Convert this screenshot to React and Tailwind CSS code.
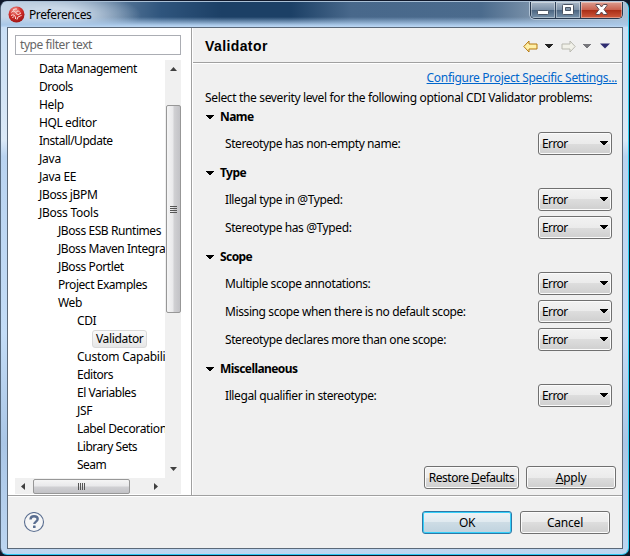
import React from 'react';

const tree = [
  ['Data Management', 'pl-6', 'tracking-[-0.5px]'],
  ['Drools', 'pl-6', 'tracking-[-0.5px]'],
  ['Help', 'pl-6', 'tracking-[-0.3px]'],
  ['HQL editor', 'pl-6', 'tracking-[-0.4px]'],
  ['Install/Update', 'pl-6', 'tracking-[-0.48px]'],
  ['Java', 'pl-6', 'tracking-[-0.2px]'],
  ['Java EE', 'pl-6', 'tracking-[-0.3px]'],
  ['JBoss jBPM', 'pl-6', 'tracking-[-0.35px]'],
  ['JBoss Tools', 'pl-6', 'tracking-[-0.25px]'],
  ['JBoss ESB Runtimes', 'pl-[43px]', 'tracking-[-0.42px]'],
  ['JBoss Maven Integration', 'pl-[43px]', 'tracking-[-0.42px]'],
  ['JBoss Portlet', 'pl-[43px]', 'tracking-[-0.4px]'],
  ['Project Examples', 'pl-[43px]', 'tracking-[-0.45px]'],
  ['Web', 'pl-[43px]', 'tracking-[-0.3px]'],
  ['CDI', 'pl-[62px]', 'tracking-[-0.4px]'],
  ['Validator', 'pl-[77px]', 'tracking-[-0.3px]'],
  ['Custom Capabilities', 'pl-[62px]', 'tracking-[-0.22px]'],
  ['Editors', 'pl-[62px]', 'tracking-[-0.5px]'],
  ['El Variables', 'pl-[62px]', 'tracking-[-0.45px]'],
  ['JSF', 'pl-[62px]', 'tracking-[-0.3px]'],
  ['Label Decorations', 'pl-[62px]', 'tracking-[-0.36px]'],
  ['Library Sets', 'pl-[62px]', 'tracking-[-0.48px]'],
  ['Seam', 'pl-[62px]', 'tracking-[-0.5px]'],
];

const sections = [
  { name: 'Name', rows: ['Stereotype has non-empty name:'] },
  { name: 'Type', rows: ['Illegal type in @Typed:', 'Stereotype has @Typed:'] },
  {
    name: 'Scope',
    rows: ['Multiple scope annotations:', 'Missing scope when there is no default scope:', 'Stereotype declares more than one scope:'],
  },
  { name: 'Miscellaneous', rows: ['Illegal qualifier in stereotype:'] },
];

function Down({ className }) {
  return (
    <svg className={className} width="9" height="5" viewBox="0 0 9 5" fill="currentColor" shapeRendering="crispEdges">
      <path d="M0 0h8v1H0zM1 1h6v1H1zM2 2h4v1H2zM3 3h2v1H3z" />
    </svg>
  );
}

const face = 'bg-[linear-gradient(#f2f2f2,#ebebeb_50%,#dddddd_50%,#cfcfcf)] border border-[#707070] rounded-[3px] shadow-[inset_0_0_0_1px_#fbfbfb]';

function Combo() {
  return (
    <div className={`flex h-[23px] w-[74px] items-center justify-between pl-[3px] pr-[2px] ${face}`}>
      <span className="tracking-[-0.6px]">Error</span>
      <Down />
    </div>
  );
}

function Button({ children, className }) {
  return <div className={`flex h-[23px] items-center justify-center ${className}`}>{children}</div>;
}

function Title() {
  return (
    <div className="flex h-[25px] shrink-0 items-start justify-between rounded-t-[6px] bg-[linear-gradient(to_bottom,transparent_60%,#a9c8e8_92%,#bdd7f3),radial-gradient(ellipse_90px_24px_at_50px_13px,#c9d8e8_30%,transparent),linear-gradient(90deg,#c3d5e8_0px,#8ba3bc_60px,#2f557d_160px,#1c4066_220px,#1c4066_290px,#48688b_350px,#4b6b8d_480px,#8197ae_540px,#a9bfd5_628px)] pl-[7px] pr-[5px]">
      <div className="flex h-[25px] items-center gap-1">
        <svg width="17" height="17" viewBox="0 0 17 17">
          <defs>
            <radialGradient id="ball" cx="40%" cy="25%" r="75%">
              <stop offset="0" stopColor="#ee9a94" />
              <stop offset=".5" stopColor="#d5332e" />
              <stop offset="1" stopColor="#a01515" />
            </radialGradient>
          </defs>
          <circle cx="8.5" cy="8.5" r="8" fill="url(#ball)" />
          <path d="M3.500 6.500q1.500-3 3-1t2.500 0 3 1M3 9.500q2-1.500 3.500 0t1 3.500M9 13.500q.500-3 2-3t2.500-1.500M8 7.500q2 2.500 5-.5M5 4q2-1.500 4-1M4.500 12l1-1.500" fill="none" stroke="#fbe0dd" strokeWidth="1" />
        </svg>
        <span className="tracking-[-0.4px]">Preferences</span>
      </div>
      <div className="flex h-[17px] overflow-hidden rounded-b-[5px] border border-t-0 border-[#26384f] shadow-[0_0_0_1px_#b4c6d8]">
        <div className="flex w-[25px] justify-center border-r border-[#31445b] bg-[linear-gradient(#a9b8c8,#7d91a8_48%,#4b6480_50%,#7893ac)] pt-[8px] shadow-[inset_0_0_0_1px_#ffffff60]">
          <svg width="12" height="5"><rect x=".5" y=".5" width="11" height="4" rx="1" fill="#fff" stroke="#4b5564" /></svg>
        </div>
        <div className="flex w-[25px] justify-center border-r border-[#31445b] bg-[linear-gradient(#a9b8c8,#7d91a8_48%,#4b6480_50%,#7893ac)] pt-[2px] shadow-[inset_0_0_0_1px_#ffffff60]">
          <svg width="12" height="11"><path d="M.5 1.500q0-1 1-1h9q1 0 1 1v8q0 1-1 1h-9q-1 0-1-1zM3.500 3.500v3h5v-3z" fillRule="evenodd" fill="#fff" stroke="#4b5564" /></svg>
        </div>
        <div className="flex w-[41px] justify-center bg-[linear-gradient(#dc9d90,#c9624f_48%,#a82c15_50%,#cf5a3c)] pt-[2px] shadow-[inset_0_0_0_1px_#ffffff60]">
          <svg width="13" height="11" viewBox="0 0 13 11"><path d="M1 .5h3.500l2 2.500 2-2.500H12v1L9 5.500l3 4v1H8.500l-2-2.500-2 2.500H1v-1l3-4-3-4z" fill="#fff" stroke="#5d4a50" /></svg>
        </div>
      </div>
    </div>
  );
}

function Sidebar() {
  return (
    <div className="flex w-[184px] shrink-0 flex-col border-r border-[#a0a0a0] bg-white pl-[7px] pt-[7px]">
      <div className="flex h-5 w-[166px] items-center border border-[#abadb3] pl-1 tracking-[-0.42px] text-[#666]">type filter text</div>
      <div className="mt-[5px] flex h-[418px]">
        <div className="w-[150px] overflow-hidden">
          {tree.map(([t, pad, track]) => (
            <div key={t} className={`flex h-[18px] items-center whitespace-nowrap ${pad}`}>
              {t === 'Validator' ? (
                <span className="flex h-[18px] w-[55px] items-center rounded-[3px] border border-[#d9d9d9] bg-[linear-gradient(#fafafa,#e6e6e6)] pl-[3px] tracking-[-0.35px]">{t}</span>
              ) : (
                <span className={track}>{t}</span>
              )}
            </div>
          ))}
        </div>
        <div className="flex w-4 flex-col items-center bg-[#f0f0f0]">
          <svg className="mt-[7px] shrink-0" width="7" height="4" fill="#404040"><path d="M3.500 0L7 4H0z" /></svg>
          <div className="mt-[34px] flex h-[208px] w-[15px] shrink-0 flex-col items-center justify-center gap-px rounded-[2px] border border-[#979797] bg-[linear-gradient(90deg,#f5f5f5,#e9e9eb_45%,#d0d0d3_55%,#c2c2c6)]">
            <div className="h-px w-[7px] bg-[#555]" />
            <div className="h-px w-[7px] bg-[#555]" />
            <div className="h-px w-[7px] bg-[#555]" />
            <div className="h-px w-[7px] bg-[#555]" />
          </div>
          <svg className="mt-[154px] shrink-0" width="7" height="4" fill="#404040"><path d="M3.500 4L7 0H0z" /></svg>
        </div>
      </div>
      <div className="flex h-4 w-[166px] items-center bg-[#f0f0f0] pl-[6px]">
        <svg width="4" height="7" fill="#404040"><path d="M0 3.500L4 0V7z" /></svg>
        <div className="ml-2 flex h-[15px] w-[97px] items-center justify-center gap-px rounded-[2px] border border-[#979797] bg-[linear-gradient(#f5f5f5,#e9e9eb_45%,#d0d0d3_55%,#c2c2c6)]">
          <div className="h-[7px] w-px bg-[#555]" />
          <div className="h-[7px] w-px bg-[#555]" />
          <div className="h-[7px] w-px bg-[#555]" />
          <div className="h-[7px] w-px bg-[#555]" />
        </div>
        <svg className="ml-[24px]" width="4" height="7" fill="#404040"><path d="M4 3.500L0 0V7z" /></svg>
      </div>
    </div>
  );
}

function Nav() {
  return (
    <div className="flex items-center">
      <svg width="15" height="13" viewBox="0 0 15 13">
        <path d="M.8 6.500L6 1v3h8v5H6v3z" fill="#fff0a8" stroke="#b5790f" strokeLinejoin="round" />
      </svg>
      <Down className="ml-[7px] text-[#222]" />
      <svg className="ml-[7px]" width="15" height="13" viewBox="0 0 15 13">
        <path d="M14.200 6.500L9 1v3H1v5h8v3z" fill="#f1f1e9" stroke="#b9b9b0" strokeLinejoin="round" />
      </svg>
      <Down className="ml-[7px] text-[#77777c]" />
      <svg className="ml-[8px]" width="10" height="6"><path d="M0 .5h10L5 5.500z" fill="#2e2c70" /></svg>
    </div>
  );
}

export default function App() {
  return (
    <div className="h-[556px] w-[630px] overflow-hidden bg-[#10182a] pt-px font-['Noto_Sans','Open_Sans',sans-serif] text-[12px] leading-4 text-black">
      <div className="flex h-[554px] w-[629px] flex-col rounded-[7px] border border-b-[#2cc6f2] border-l-[#56697e] border-r-[#2cd2f7] border-t-[#a9bfd5] bg-[linear-gradient(#c5dcf4,#dbe9f7_25%,#b9d3f0_28%,#c3dcf6_60%,#aac6e6_80%,#bdd6f1)]">
        <Title />
        <div className="ml-[6px] mr-[5px] flex h-[522px] flex-col border border-[#5b6979] bg-[#f0f0f0]">
          <div className="flex h-[468px] border-b border-[#a0a0a0]">
            <Sidebar />
            <div className="flex min-w-0 flex-1 flex-col border-l border-white">
              <div className="flex h-[35px] shrink-0 items-center justify-between border-b border-[#a0a0a0] pl-3 pr-[12px] pt-[2px]">
                <h1 className="font-['Liberation_Sans',Arial,sans-serif] text-[14px] font-bold tracking-[0.4px]">Validator</h1>
                <Nav />
              </div>
              <div className="flex h-[39px] shrink-0 flex-col border-t border-white">
                <div className="mt-[6px] flex justify-end pr-[5px]">
                  <span className="tracking-[-0.31px] text-[#0066cc] underline">Configure Project Specific Settings...</span>
                </div>
                <div className="mt-[4px] whitespace-nowrap pl-3 tracking-[-0.345px]">Select the severity level for the following optional CDI Validator problems:</div>
              </div>
              <div className="flex flex-col">
                {sections.map((s) => (
                  <div key={s.name}>
                    <div className="flex h-7 items-center gap-[5px] pl-[13px] pt-[2px]">
                      <Down />
                      <span className="font-bold tracking-[-0.58px]">{s.name}</span>
                    </div>
                    {s.rows.map((r) => (
                      <div key={r} className="flex h-7 items-center justify-between pb-px pl-[32px] pr-[10px]">
                        <span className="tracking-[-0.4px]">{r}</span>
                        <Combo />
                      </div>
                    ))}
                  </div>
                ))}
              </div>
              <div className="mb-[6px] mt-auto flex justify-end gap-[7px] pr-[6px]">
                <Button className={`w-[95px] ${face}`}>
                  <span className="whitespace-nowrap tracking-[-0.48px]">Restore <u>D</u>efaults</span>
                </Button>
                <Button className={`w-[90px] ${face}`}>
                  <span className="tracking-[-0.2px]"><u>A</u>pply</span>
                </Button>
              </div>
            </div>
          </div>
          <div className="flex flex-1 items-center justify-between border-t border-white pl-[15px] pr-[12px]">
            <svg width="22" height="22" viewBox="0 0 22 22" fill="none">
              <circle cx="11" cy="10" r="9.500" fill="#f6f6f6" stroke="#5a6e90" strokeWidth="1.100" />
              <path d="M7.500 7.500C7.600 5.200 9 4.200 11 4.200s3.700 1 3.700 2.900c0 2.500-3.400 2.500-3.400 5" stroke="#5a6e90" strokeWidth="2.400" />
              <rect x="10" y="13.500" width="2.600" height="2.600" rx=".5" fill="#5a6e90" />
            </svg>
            <div className="flex gap-2">
              <Button className="w-[90px] rounded-[3px] border border-[#2c79a8] bg-[linear-gradient(#eef3f6,#dfe9ef_50%,#cddce5_50%,#bfd2de)] tracking-[-0.3px] shadow-[inset_0_0_0_1px_#35d0fa]">OK</Button>
              <Button className={`w-[90px] tracking-[-0.2px] ${face}`}>Cancel</Button>
            </div>
          </div>
        </div>
      </div>
    </div>
  );
}
